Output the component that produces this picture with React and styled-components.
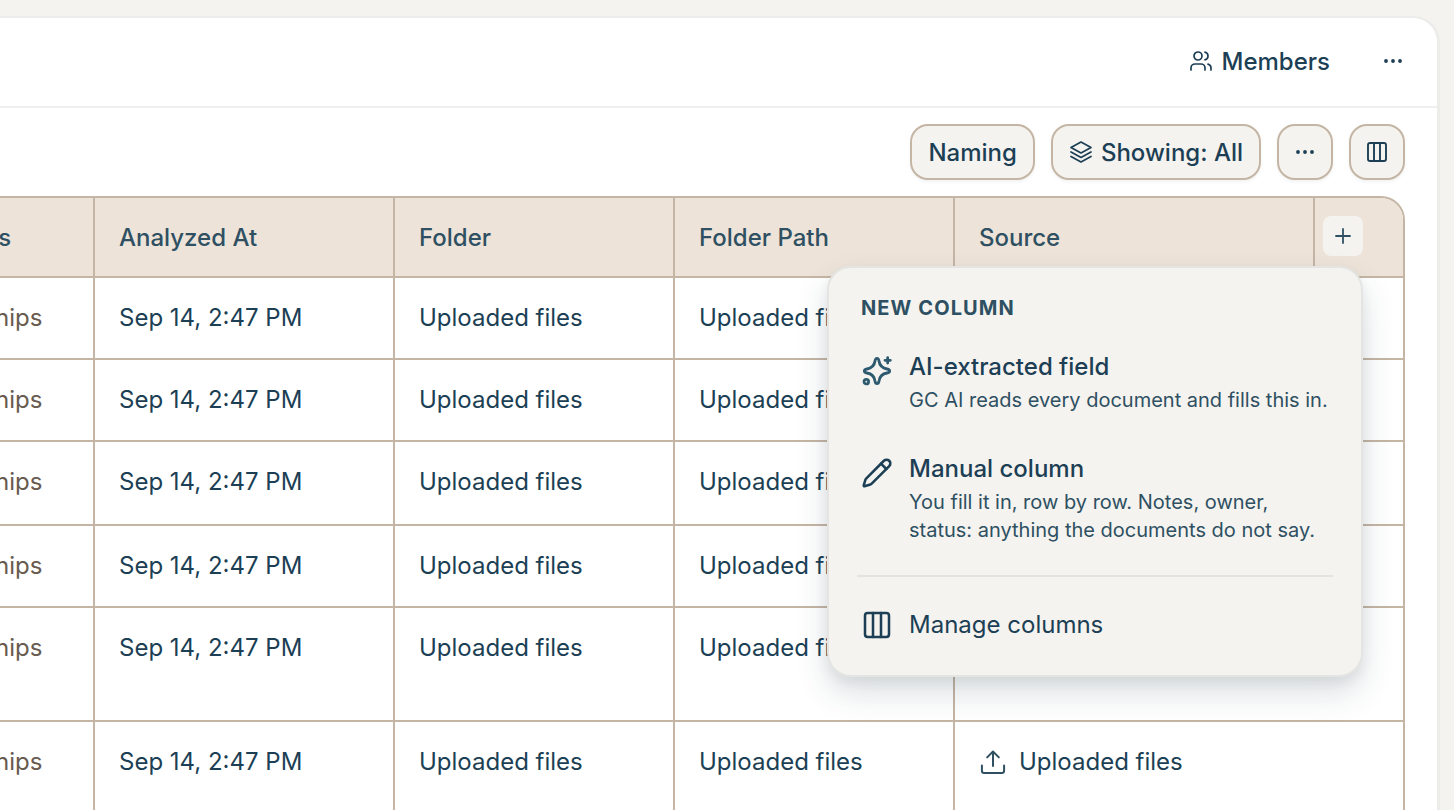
import React from "react";
import styled, { createGlobalStyle } from "styled-components";

const Global = createGlobalStyle`
  html, body { margin: 0; padding: 0; height: 810px; overflow: hidden; background: #f5f3ef; }
  body { font-family: Inter, "Liberation Sans", sans-serif; color: #1c3f55; }
  #root { height: 810px; }
  * { box-sizing: border-box; }
`;

const Page = styled.div`
  height: 810px;
  padding: 18px 17px 0 0;
  overflow: hidden;
`;

const Card = styled.div`
  height: 792px;
  background: #fff;
  border-radius: 0 24px 0 0;
  box-shadow: 1px 0 0 2px #ecedeb;
  clip-path: inset(-4px -4px 0 0);
  display: flex;
  flex-direction: column;
  overflow: hidden;
`;

const Header = styled.header`
  height: 90px;
  flex: none;
  border-bottom: 2px solid #eeefee;
  display: flex;
  align-items: center;
  justify-content: flex-end;
  padding: 0 32px 2px 0;
  gap: 51px;
`;

const MembersLabel = styled.div`
  display: flex;
  align-items: center;
  gap: 9px;
  font-size: 24px;
  font-weight: 500;
`;

const Toolbar = styled.div`
  flex: none;
  display: flex;
  justify-content: flex-end;
  gap: 16px;
  padding: 16px 32px 16px 0;
`;

const ToolButton = styled.button`
  height: 56px;
  min-width: 56px;
  padding: ${(p) => (p.$icon ? "0" : "0 16px")};
  display: flex;
  align-items: center;
  justify-content: center;
  gap: 8px;
  background: #f5f3ef;
  border: 2px solid #c5b5a4;
  border-radius: 18px;
  box-shadow: 0 2px 3px rgba(40, 50, 60, 0.06);
  font: 500 24px Inter, sans-serif;
  color: #1c3f55;
`;

const TableArea = styled.div`
  flex: 1;
  min-height: 0;
  display: flex;
  justify-content: flex-end;
  padding-right: 32px;
  position: relative;
`;

const Table = styled.div`
  flex: none;
  width: 1532px;
  align-self: flex-start;
  display: grid;
  grid-template-columns: 220px 300px 280px 280px 360px 90px;
  border-top: 2px solid #c5b5a4;
  border-right: 2px solid #c5b5a4;
  border-top-right-radius: 24px;
  overflow: hidden;
`;

const HeadCell = styled.div`
  height: 80px;
  background: #ede3d9;
  border-left: 2px solid #c5b5a4;
  border-bottom: 2px solid #c5b5a4;
  padding: 0 24px;
  display: flex;
  align-items: center;
  font-size: 24px;
  font-weight: 500;
  color: #2e5062;
  white-space: nowrap;
`;

const AddCell = styled(HeadCell)`
  padding: 18px 40px 0 8px;
  align-items: flex-start;
`;

const AddButton = styled.div`
  width: 40px;
  height: 40px;
  background: #f5f3ef;
  border-radius: 8px;
  display: flex;
  align-items: center;
  justify-content: center;
`;

const Cell = styled.div`
  height: ${(p) => p.$h}px;
  grid-column: span ${(p) => p.$span || 1};
  border-left: 2px solid #c5b5a4;
  border-bottom: 2px solid #c5b5a4;
  padding: 24px 24px 0;
  font-size: 24px;
  line-height: 32px;
  white-space: nowrap;
  display: flex;
  gap: 12px;
  align-items: flex-start;
  color: ${(p) => (p.$muted ? "#685a4e" : "#1c3f55")};
`;

const SourceIcon = styled.span`
  flex: none;
  display: block;
  height: 28px;
  margin-top: 2px;
  color: #2e5062;
`;

const Popover = styled.div`
  position: absolute;
  left: 827px;
  top: 70px;
  width: 536px;
  height: 411px;
  background: #f5f3ef;
  border: 2px solid #e4e5e3;
  border-radius: 24px;
  box-shadow: 0 16px 32px rgba(40, 60, 75, 0.16), 0 6px 12px rgba(40, 60, 75, 0.07);
  padding: 28px 28px 0;
`;

const PopoverLabel = styled.div`
  font-size: 20px;
  font-weight: 700;
  letter-spacing: 1.1px;
  line-height: 24px;
  color: #2e5062;
  padding: 0 4px;
`;

const MenuItem = styled.div`
  display: flex;
  gap: 16px;
  padding: 0 4px;
  margin-top: ${(p) => p.$mt}px;
`;

const ItemIcon = styled.div`
  flex: none;
  width: 32px;
  height: 32px;
  margin-top: ${(p) => p.$offset || 0}px;
`;

const ItemTitle = styled.div`
  font-size: 24px;
  font-weight: 500;
  line-height: 32px;
`;

const ItemDesc = styled.div`
  font-size: 20px;
  line-height: 28px;
  color: #2e5062;
  margin-top: 3px;
  width: 420px;
`;

const Divider = styled.div`
  height: 2px;
  background: #e3e4e2;
  margin-top: 31px;
`;

const ManageText = styled.div`
  font-size: 24px;
  line-height: 32px;
`;

const Icon = ({ size = 24, children, sw = 2, color = "currentColor" }) => (
  <svg width={size} height={size} viewBox="0 0 24 24" fill="none" stroke={color} strokeWidth={sw} strokeLinecap="round" strokeLinejoin="round" style={{ display: "block" }}>
    {children}
  </svg>
);
const Dots = () => (
  <Icon size={24}><circle cx="5" cy="12" r=".9" fill="currentColor" /><circle cx="12" cy="12" r=".9" fill="currentColor" /><circle cx="19" cy="12" r=".9" fill="currentColor" /></Icon>
);
const Columns = ({ size, sw }) => (
  <Icon size={size} sw={sw}><rect x="3" y="3" width="18" height="18" rx="2" /><path d="M9 3v18M15 3v18" /></Icon>
);

const rows = [{ h: 82 }, { h: 82 }, { h: 84 }, { h: 82 }, { h: 114 }, { h: 120 }];

export default function App() {
  return (
    <Page>
      <Global />
      <Card>
        <Header>
          <MembersLabel>
            <Icon size={24} sw={1.7}><path d="M16 21v-2a4 4 0 0 0-4-4H6a4 4 0 0 0-4 4v2" /><circle cx="9" cy="7" r="4" /><path d="M22 21v-2a4 4 0 0 0-3-3.87" /><path d="M16 3.13a4 4 0 0 1 0 7.75" /></Icon>
            Members
          </MembersLabel>
          <Dots />
        </Header>
        <Toolbar>
          <ToolButton>Naming</ToolButton>
          <ToolButton>
            <Icon size={24} sw={1.7}><path d="M12 2 2 7.5 12 13l10-5.5L12 2Z" /><path d="m2 12 10 5.5L22 12" /><path d="m2 16.5 10 5.5 10-5.5" /></Icon>
            Showing: All
          </ToolButton>
          <ToolButton $icon><Dots /></ToolButton>
          <ToolButton $icon><Columns size={24} sw={1.9} /></ToolButton>
        </Toolbar>
        <TableArea>
          <Table>
            <HeadCell>Contracts</HeadCell>
            <HeadCell>Analyzed At</HeadCell>
            <HeadCell>Folder</HeadCell>
            <HeadCell>Folder Path</HeadCell>
            <HeadCell>Source</HeadCell>
            <AddCell>
              <AddButton>
                <Icon size={24} sw={1.8}><path d="M12 5v14M5 12h14" /></Icon>
              </AddButton>
            </AddCell>
            {rows.map((r, i) => (
              <React.Fragment key={i}>
                <Cell $h={r.h} $muted>Partnerships</Cell>
                <Cell $h={r.h}>Sep 14, 2:47 PM</Cell>
                <Cell $h={r.h}>Uploaded files</Cell>
                <Cell $h={r.h}>Uploaded files</Cell>
                <Cell $h={r.h} $span={2}>
                  <SourceIcon>
                    <Icon size={28} sw={1.7}><path d="M12 15.5V3M7 8l5-5 5 5" /><path d="M2.5 15v4.5a2 2 0 0 0 2 2h15a2 2 0 0 0 2-2V15" /></Icon>
                  </SourceIcon>
                  Uploaded files
                </Cell>
              </React.Fragment>
            ))}
          </Table>
          <Popover>
            <PopoverLabel>NEW COLUMN</PopoverLabel>
            <MenuItem $mt={31}>
              <ItemIcon $offset={4}>
                <Icon size={32} sw={2.1} color="#2e5a70">
                  <path d="M12 2.5C13 2.5 13.3 3.3 13.5 4.5 14 8 15.5 9.8 19.5 10.5 20.7 10.7 21.5 11 21.5 12 21.5 13 20.7 13.3 19.5 13.5 15.5 14.2 14 16 13.5 19.5 13.3 20.7 13 21.5 12 21.5 11 21.5 10.7 20.7 10.5 19.5 10 16 8.5 14.2 4.5 13.5 3.3 13.3 2.5 13 2.5 12 2.5 11 3.3 10.7 4.5 10.5 8.5 9.8 10 8 10.5 4.5 10.7 3.3 11 2.5 12 2.5Z" />
                  <path d="M20 2v4M18 4h4" />
                  <circle cx="4" cy="20" r="1.7" />
                </Icon>
              </ItemIcon>
              <div>
                <ItemTitle>AI-extracted field</ItemTitle>
                <ItemDesc>GC AI reads every document and fills this in.</ItemDesc>
              </div>
            </MenuItem>
            <MenuItem $mt={39}>
              <ItemIcon $offset={4}>
                <Icon size={32} sw={1.9}><path d="M21.174 6.812a1 1 0 0 0-3.986-3.987L3.842 16.174a2 2 0 0 0-.5.83l-1.321 4.352a.5.5 0 0 0 .623.622l4.353-1.32a2 2 0 0 0 .83-.497z" /><path d="m15 5 4 4" /></Icon>
              </ItemIcon>
              <div>
                <ItemTitle>Manual column</ItemTitle>
                <ItemDesc>You fill it in, row by row. Notes, owner, status: anything the documents do not say.</ItemDesc>
              </div>
            </MenuItem>
            <Divider />
            <MenuItem $mt={32}>
              <ItemIcon><Columns size={32} sw={1.9} /></ItemIcon>
              <ManageText>Manage columns</ManageText>
            </MenuItem>
          </Popover>
        </TableArea>
      </Card>
    </Page>
  );
}
